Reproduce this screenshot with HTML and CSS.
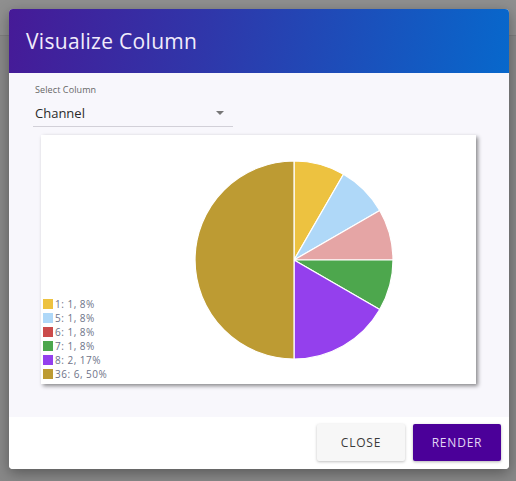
FILE: index.html
```html
<!DOCTYPE html>
<html>
<head>
<meta charset="utf-8">
<link rel="stylesheet" href="styles.css">
</head>
<body>
<div class="dialog">
  <div class="header"><h1 class="title">Visualize Column</h1></div>
  <div class="content">
    <div class="label">Select Column</div>
    <div class="select"><span class="value">Channel</span><span class="arrow"></span></div>
    <div class="card">
      <ul class="legend">
        <li><span class="sw" style="background:#edc240"></span>1: 1, 8%</li>
        <li><span class="sw" style="background:#afd8f8"></span>5: 1, 8%</li>
        <li><span class="sw" style="background:#cb4b4b"></span>6: 1, 8%</li>
        <li><span class="sw" style="background:#4da74d"></span>7: 1, 8%</li>
        <li><span class="sw" style="background:#9440ed"></span>8: 2, 17%</li>
        <li><span class="sw" style="background:#bd9b33"></span>36: 6, 50%</li>
      </ul>
      <svg class="pie" width="333" height="249" viewBox="0 0 333 249">
        <g stroke="#ffffff" stroke-width="1.2" stroke-linejoin="round">
          <path d="M151 125 L151 26 A99 99 0 0 1 200.5 39.26 Z" fill="#edc240"/>
          <path d="M151 125 L200.5 39.26 A99 99 0 0 1 236.74 75.5 Z" fill="#afd8f8"/>
          <path d="M151 125 L236.74 75.5 A99 99 0 0 1 250 125 Z" fill="#e5a5a5"/>
          <path d="M151 125 L250 125 A99 99 0 0 1 236.74 174.5 Z" fill="#4da74d"/>
          <path d="M151 125 L236.74 174.5 A99 99 0 0 1 151 224 Z" fill="#9440ed"/>
          <path d="M151 125 L151 224 A99 99 0 0 1 151 26 Z" fill="#bd9b33"/>
        </g>
      </svg>
    </div>
  </div>
  <div class="footer">
    <button class="btn btn-close">CLOSE</button>
    <button class="btn btn-render">RENDER</button>
  </div>
</div>
</body>
</html>
```
FILE: styles.css
```css
html, body {
  margin: 0;
  padding: 0;
}
body {
  width: 516px;
  height: 481px;
  box-sizing: border-box;
  padding: 9px 7px 0 9px;
  background: linear-gradient(to bottom, #8f8f8f 0, #8f8f8f 35px, #7e7e7e 35px, #7e7e7e 36px, #888888 36px, #888888 100%);
  font-family: "Open Sans", "Liberation Sans", sans-serif;
  overflow: hidden;
}
.dialog {
  width: 500px;
  height: 460px;
  display: flex;
  flex-direction: column;
  background: #ffffff;
  border-radius: 4px;
  overflow: hidden;
  box-shadow: 0 4px 14px rgba(0, 0, 0, 0.35);
}
.header {
  height: 64px;
  flex: none;
  display: flex;
  align-items: center;
  padding-left: 17px;
  background: linear-gradient(100deg, #461a97 0%, #2f37aa 40%, #0768cc 100%);
}
.title {
  margin: 0;
  color: #f1ecfb;
  font-weight: 400;
  font-size: 21px;
  letter-spacing: 0.3px;
  line-height: 1;
  padding-top: 1px;
}
.content {
  flex: none;
  height: 344px;
  box-sizing: border-box;
  background: #f8f7fc;
  padding: 11px 24px 0 24px;
  display: flex;
  flex-direction: column;
  align-items: flex-start;
}
.label {
  font-size: 9px;
  line-height: 11px;
  color: #666666;
  padding-left: 2px;
  letter-spacing: 0.1px;
}
.select {
  margin-top: 10px;
  width: 200px;
  box-sizing: border-box;
  display: flex;
  align-items: center;
  justify-content: space-between;
  padding: 0 9px 4px 2px;
  border-bottom: 1px solid #d2d0d8;
}
.value {
  font-size: 13px;
  line-height: 17px;
  color: #2a2a2a;
}
.arrow {
  width: 0;
  height: 0;
  border-left: 4px solid transparent;
  border-right: 4px solid transparent;
  border-top: 4px solid #777777;
  margin-bottom: 1px;
}
.card {
  margin: 8px 0 0 8px;
  width: 435px;
  height: 249px;
  background: #ffffff;
  box-shadow: 2px 2px 4px rgba(0, 0, 0, 0.45);
  display: flex;
  align-items: flex-end;
}
.legend {
  list-style: none;
  margin: 0;
  padding: 0 0 3px 2px;
  width: 100px;
  flex: none;
}
.legend li {
  display: flex;
  align-items: center;
  height: 14px;
  font-size: 10px;
  letter-spacing: 0.5px;
  color: #6e7388;
  white-space: nowrap;
}
.sw {
  width: 10px;
  height: 10px;
  margin-right: 2px;
  flex: none;
}
.pie {
  display: block;
  flex: none;
  align-self: flex-start;
}
.footer {
  flex: 1;
  display: flex;
  justify-content: flex-end;
  align-items: flex-start;
  gap: 8px;
  padding: 7px 8px 0 0;
  background: #ffffff;
}
.btn {
  width: 88px;
  height: 37px;
  border: none;
  border-radius: 2px;
  font-family: "Open Sans", "Liberation Sans", sans-serif;
  font-size: 12px;
  font-weight: 400;
  letter-spacing: 0.8px;
  cursor: pointer;
}
.btn-close {
  background: #f7f7f7;
  color: #3a3a3a;
  box-shadow: 0 1px 3px rgba(0, 0, 0, 0.25);
}
.btn-render {
  background: #4b0099;
  color: #e2d6f5;
  box-shadow: 0 1px 3px rgba(0, 0, 0, 0.3);
}
```
